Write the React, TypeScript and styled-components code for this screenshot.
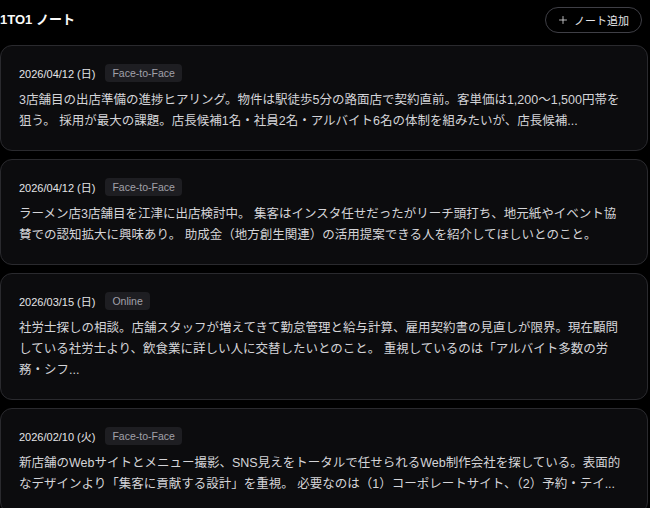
import React from 'react';
import styled, { createGlobalStyle } from 'styled-components';
import { Plus } from 'lucide-react';

const GlobalStyle = createGlobalStyle`
  html, body {
    margin: 0;
    padding: 0;
    background: #000;
  }
  body {
    font-family: "Liberation Sans", "Noto Sans CJK JP", sans-serif;
    color: #e4e4e7;
  }
`;

const Page = styled.div`
  width: 648px;
  background: #000;
`;

const Header = styled.div`
  display: flex;
  align-items: center;
  justify-content: space-between;
  padding: 7px 6px 12px 0;
`;

const Title = styled.h2`
  margin: 0 0 3px;
  font-size: 13px;
  font-weight: 700;
  color: #fafafa;
`;

const AddButton = styled.button`
  display: flex;
  align-items: center;
  gap: 5px;
  height: 26px;
  padding: 0 12px 0 11px;
  background: #000;
  border: 1px solid #3f3f46;
  border-radius: 13px;
  color: #e4e4e7;
  font-family: inherit;
  font-size: 11px;
  cursor: pointer;
`;

const List = styled.div`
  display: flex;
  flex-direction: column;
  gap: 8px;
`;

const Card = styled.div`
  background: #0c0c0e;
  border: 1px solid #2a2a2e;
  border-radius: 12px;
  padding: 18px;
`;

const Meta = styled.div`
  display: flex;
  align-items: center;
  gap: 10px;
  height: 18px;
  margin-bottom: 8px;
`;

const DateText = styled.span`
  font-size: 11px;
  color: #e4e4e7;
`;

const Badge = styled.span`
  display: inline-flex;
  align-items: center;
  height: 18px;
  padding: 0 7px;
  border-radius: 4px;
  background: #1e1e22;
  color: #a1a1aa;
  font-size: 10.5px;
`;

const Body = styled.p`
  margin: 0;
  padding-right: 4px;
  font-size: 12.5px;
  line-height: 21px;
  color: #d4d4d8;
`;

interface Note {
  date: string;
  kind: string;
  text: string;
}

const notes: Note[] = [
  {
    date: '2026/04/12 (日)',
    kind: 'Face-to-Face',
    text: '3店舗目の出店準備の進捗ヒアリング。物件は駅徒歩5分の路面店で契約直前。客単価は1,200〜1,500円帯を狙う。 採用が最大の課題。店長候補1名・社員2名・アルバイト6名の体制を組みたいが、店長候補...',
  },
  {
    date: '2026/04/12 (日)',
    kind: 'Face-to-Face',
    text: 'ラーメン店3店舗目を江津に出店検討中。 集客はインスタ任せだったがリーチ頭打ち、地元紙やイベント協賛での認知拡大に興味あり。 助成金（地方創生関連）の活用提案できる人を紹介してほしいとのこと。',
  },
  {
    date: '2026/03/15 (日)',
    kind: 'Online',
    text: '社労士探しの相談。店舗スタッフが増えてきて勤怠管理と給与計算、雇用契約書の見直しが限界。現在顧問している社労士より、飲食業に詳しい人に交替したいとのこと。 重視しているのは「アルバイト多数の労務・シフ...',
  },
  {
    date: '2026/02/10 (火)',
    kind: 'Face-to-Face',
    text: '新店舗のWebサイトとメニュー撮影、SNS見えをトータルで任せられるWeb制作会社を探している。表面的なデザインより「集客に貢献する設計」を重視。 必要なのは（1）コーポレートサイト、（2）予約・テイ...',
  },
];

export default function App() {
  return (
    <Page>
      <GlobalStyle />
      <Header>
        <Title>1TO1 ノート</Title>
        <AddButton>
          <Plus size={12} strokeWidth={1.6} />
          ノート追加
        </AddButton>
      </Header>
      <List>
        {notes.map((n, i) => (
          <Card key={i}>
            <Meta>
              <DateText>{n.date}</DateText>
              <Badge>{n.kind}</Badge>
            </Meta>
            <Body>{n.text}</Body>
          </Card>
        ))}
      </List>
    </Page>
  );
}
